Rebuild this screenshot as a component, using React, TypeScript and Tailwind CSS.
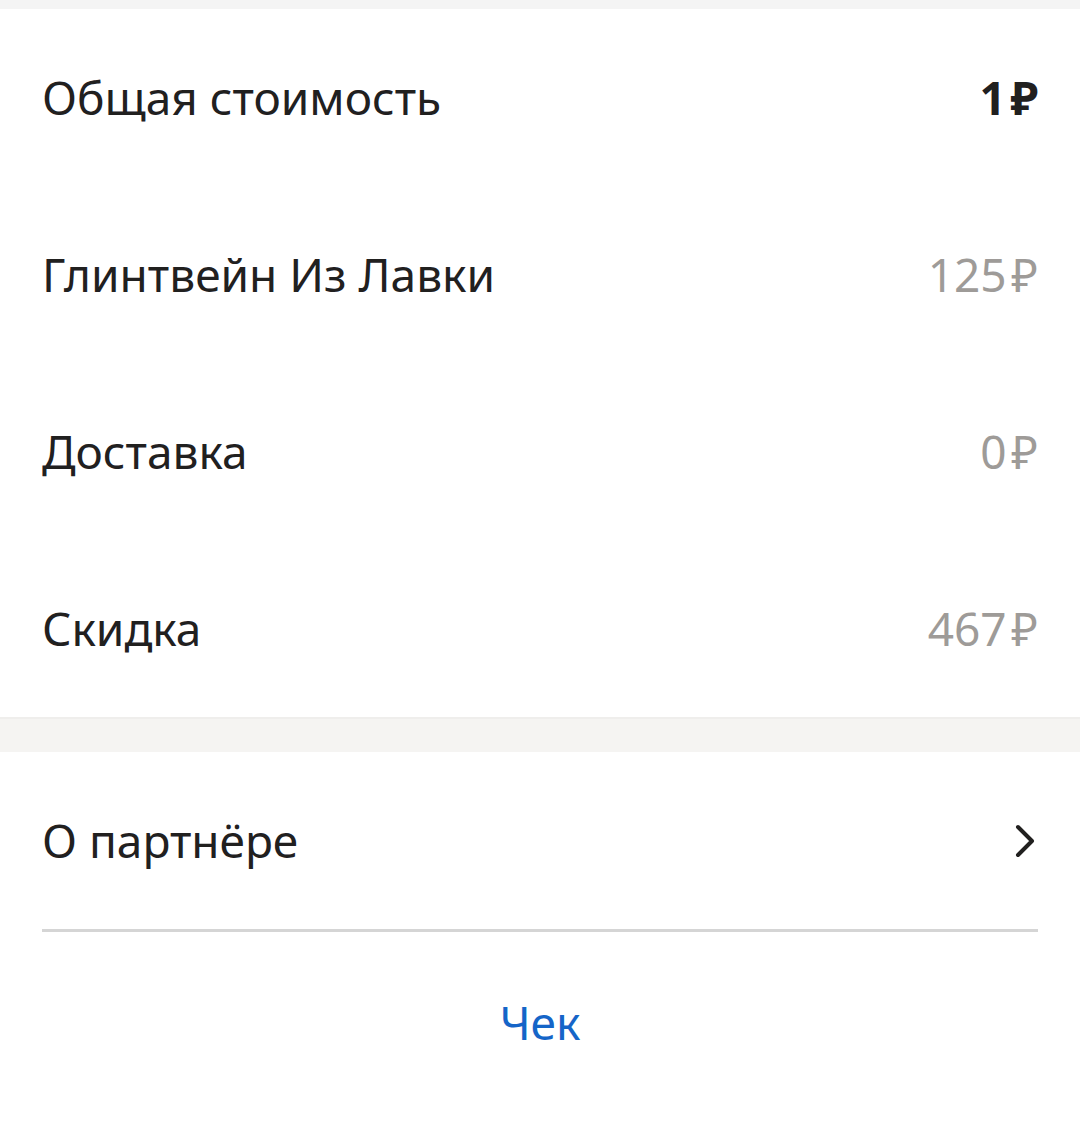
import React from "react";

const rows = [
  { label: "Общая стоимость", value: "1 ₽", strong: true },
  { label: "Глинтвейн Из Лавки", value: "125 ₽" },
  { label: "Доставка", value: "0 ₽" },
  { label: "Скидка", value: "467 ₽" },
];

export default function App() {
  return (
    <div className="min-h-[1121px] bg-white text-[#21201f] font-['Noto_Sans',sans-serif]">
      <div className="h-[9px] bg-[#f4f4f4]" />
      <div className="px-[42px]">
        {rows.map((r) => (
          <div key={r.label} className="h-[177px] flex items-center justify-between text-[46px]">
            <span>{r.label}</span>
            <span className={r.strong ? "font-bold text-[#21201f]" : "text-[#9e9b98]"}>
              {r.value.replace(" ", "\u200a")}
            </span>
          </div>
        ))}
      </div>
      <div className="h-[35px] bg-[#f5f4f2] border-t-2 border-[#efeeec]" />
      <div className="px-[42px]">
        <div className="h-[180px] flex items-center justify-between text-[46px] border-b-[3px] border-[#d5d5d5]">
          <span>О партнёре</span>
          <svg width="22" height="34" viewBox="0 0 22 34" className="mr-[2px]">
            <path d="M4 3 L18 17 L4 31" fill="none" stroke="#21201f" strokeWidth="4" strokeLinecap="round" strokeLinejoin="round" />
          </svg>
        </div>
        <div className="h-[180px] flex items-center justify-center text-[46px] text-[#1565c8]">
          Чек
        </div>
      </div>
    </div>
  );
}
